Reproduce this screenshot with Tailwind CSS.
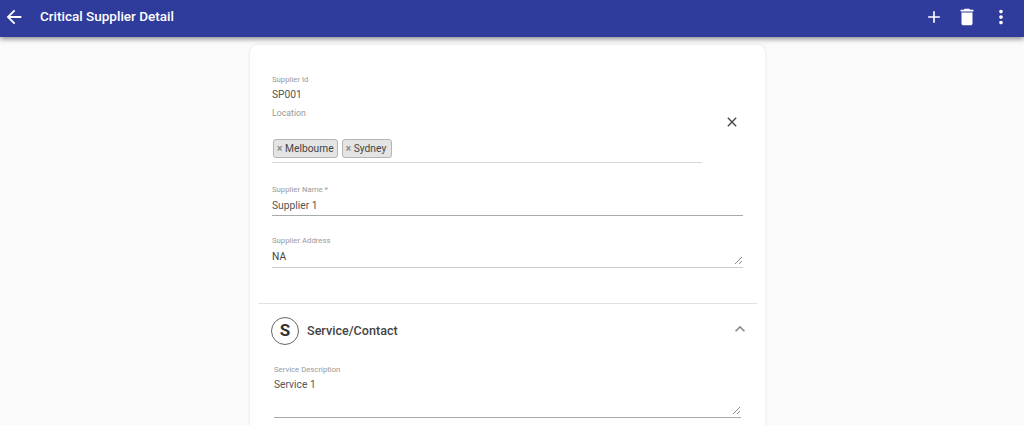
<!DOCTYPE html>
<html lang="en">
<head>
  <meta charset="UTF-8">
  <title>Critical Supplier Detail</title>
  <script src="https://cdn.jsdelivr.net/npm/@tailwindcss/browser@4"></script>
</head>
<body class="bg-[#fafafa] font-['Roboto',sans-serif] h-[425px] overflow-hidden">
  <!-- Top bar -->
  <header class="h-[37px] bg-[#2f3c9c] shadow-[0_2px_5px_rgba(0,0,0,0.45)] flex items-center text-white relative z-10">
    <svg class="w-[22px] h-[22px] ml-[3px] mb-[3px]" viewBox="0 0 24 24" fill="currentColor"><path d="M20 11H7.83l5.59-5.59L12 4l-8 8 8 8 1.41-1.41L7.83 13H20v-2z"/></svg>
    <h1 class="ml-[15px] text-[13.5px] font-medium mb-[5px]">Critical Supplier Detail</h1>
    <div class="ml-auto flex items-center mb-[3px]">
      <svg class="w-[20px] h-[20px] mr-[12px]" viewBox="0 0 24 24" fill="currentColor"><path d="M19 13h-6v6h-2v-6H5v-2h6V5h2v6h6v2z"/></svg>
      <svg class="w-[22px] h-[22px] mr-[12px]" viewBox="0 0 24 24" fill="currentColor"><path d="M6 19c0 1.1.9 2 2 2h8c1.1 0 2-.9 2-2V7H6v12zM19 4h-3.5l-1-1h-5l-1 1H5v2h14V4z"/></svg>
      <svg class="w-[22px] h-[22px] mr-[12px]" viewBox="0 0 24 24" fill="currentColor"><path d="M12 8c1.1 0 2-.9 2-2s-.9-2-2-2-2 .9-2 2 .9 2 2 2zm0 2c-1.1 0-2 .9-2 2s.9 2 2 2 2-.9 2-2-.9-2-2-2zm0 6c-1.1 0-2 .9-2 2s.9 2 2 2 2-.9 2-2-.9-2-2-2z"/></svg>
    </div>
  </header>

  <!-- Card -->
  <main class="w-[515px] ml-[250px] mt-[8px] bg-white rounded-[8px] shadow-[0_0_3px_rgba(0,0,0,0.1)] h-[400px] px-[8px] pt-[30px]">
    <div class="px-[14px]">
      <div class="text-[7.75px] leading-[10px] text-[#999]">Supplier Id</div>
      <div class="text-[10.25px] leading-[14px] mt-[3px] text-[#555]">SP001</div>

      <div class="flex mt-[5px]">
        <div class="w-[430px]">
          <div class="text-[8.75px] leading-[12px] text-[#999]">Location</div>
          <div class="flex gap-[4px] mt-[20px] pl-[1px] pb-[4px] border-b border-[#d6d6d6]">
            <span class="flex items-center h-[19px] pl-[3px] pr-[3px] bg-[#e4e4e4] border border-[#b5b5b5] rounded-[3px] text-[10.25px] text-[#444]"><span class="w-[8px] text-[#888] text-[10px] font-bold">×</span>Melbourne</span>
            <span class="flex items-center h-[19px] pl-[3px] pr-[5px] bg-[#e4e4e4] border border-[#b5b5b5] rounded-[3px] text-[10.25px] text-[#444]"><span class="w-[8px] text-[#888] text-[10px] font-bold">×</span>Sydney</span>
          </div>
        </div>
        <svg class="w-[16px] h-[16px] ml-[22px] mt-[7px] text-[#444]" viewBox="0 0 24 24" fill="currentColor"><path d="M19 6.41 17.59 5 12 10.59 6.41 5 5 6.41 10.59 12 5 17.59 6.41 19 12 13.41 17.59 19 19 17.59 13.41 12z"/></svg>
      </div>

      <div class="mt-[22px] border-b border-[#aaa] pb-[2px]">
        <div class="text-[7.75px] leading-[10px] text-[#999]">Supplier Name *</div>
        <div class="text-[10.25px] leading-[14px] mt-[4px] text-[#555]">Supplier 1</div>
      </div>

      <div class="mt-[20px] border-b border-[#ccc] pb-[3px] relative">
        <div class="text-[7.75px] leading-[10px] text-[#999]">Supplier Address</div>
        <div class="text-[10.25px] leading-[14px] mt-[4px] text-[#444]">NA</div>
        <svg class="absolute right-0 bottom-[2px] w-[9px] h-[9px] text-[#888]" viewBox="0 0 9 9" stroke="currentColor" fill="none"><path d="M1 8 8 1M5 8l3-3"/></svg>
      </div>
    </div>

    <div class="mt-[35px] border-t border-[#e2e2e2]">
      <div class="flex items-center pt-[13px] pl-[13px] pr-[7px]">
        <span class="w-[28px] h-[28px] rounded-full border border-[#666] flex items-center justify-center text-[17px] font-bold text-[#333]">S</span>
        <span class="ml-[8px] text-[12.6px] font-medium text-[#444]">Service/Contact</span>
        <svg class="ml-auto mb-[5px] w-[20px] h-[20px] text-[#888]" viewBox="0 0 24 24" fill="currentColor"><path d="M7.41 15.41 12 10.83l4.59 4.58L18 14l-6-6-6 6z"/></svg>
      </div>
      <div class="mx-[16px] mt-[20px] border-b border-[#aaa] h-[53px] relative">
        <div class="text-[7.75px] leading-[10px] text-[#999]">Service Description</div>
        <div class="text-[10.25px] leading-[14px] mt-[3px] text-[#555]">Service 1</div>
        <svg class="absolute right-0 bottom-[2px] w-[9px] h-[9px] text-[#888]" viewBox="0 0 9 9" stroke="currentColor" fill="none"><path d="M1 8 8 1M5 8l3-3"/></svg>
      </div>
    </div>
  </main>
</body>
</html>
